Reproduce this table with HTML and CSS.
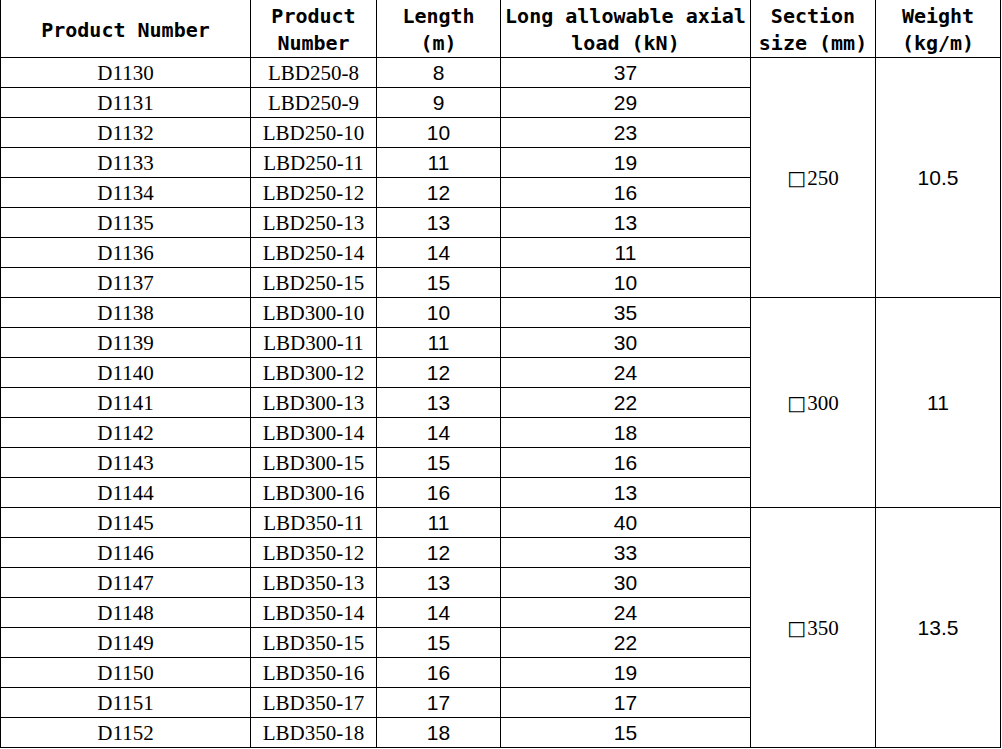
FILE: index.html
```html
<!DOCTYPE html>
<html>
<head>
<meta charset="utf-8">
<link rel="stylesheet" href="styles.css">
</head>
<body>
<table class="spec">
  <colgroup>
    <col class="c-code"><col class="c-model"><col class="c-len"><col class="c-load"><col class="c-sec"><col class="c-wt">
  </colgroup>
  <thead>
    <tr class="head-row">
      <th>Product Number</th>
      <th>Product<br>Number</th>
      <th>Length<br>(m)</th>
      <th>Long allowable axial<br>load (kN)</th>
      <th>Section<br>size (mm)</th>
      <th>Weight<br>(kg/m)</th>
    </tr>
  </thead>
  <tbody>
    <tr><td class="ser">D1130</td><td class="ser">LBD250-8</td><td class="num">8</td><td class="num">37</td><td class="ser sec" rowspan="8"><span class="sq">□</span>250</td><td class="num" rowspan="8">10.5</td></tr>
    <tr><td class="ser">D1131</td><td class="ser">LBD250-9</td><td class="num">9</td><td class="num">29</td></tr>
    <tr><td class="ser">D1132</td><td class="ser">LBD250-10</td><td class="num">10</td><td class="num">23</td></tr>
    <tr><td class="ser">D1133</td><td class="ser">LBD250-11</td><td class="num">11</td><td class="num">19</td></tr>
    <tr><td class="ser">D1134</td><td class="ser">LBD250-12</td><td class="num">12</td><td class="num">16</td></tr>
    <tr><td class="ser">D1135</td><td class="ser">LBD250-13</td><td class="num">13</td><td class="num">13</td></tr>
    <tr><td class="ser">D1136</td><td class="ser">LBD250-14</td><td class="num">14</td><td class="num">11</td></tr>
    <tr><td class="ser">D1137</td><td class="ser">LBD250-15</td><td class="num">15</td><td class="num">10</td></tr>
    <tr><td class="ser">D1138</td><td class="ser">LBD300-10</td><td class="num">10</td><td class="num">35</td><td class="ser sec" rowspan="7"><span class="sq">□</span>300</td><td class="num" rowspan="7">11</td></tr>
    <tr><td class="ser">D1139</td><td class="ser">LBD300-11</td><td class="num">11</td><td class="num">30</td></tr>
    <tr><td class="ser">D1140</td><td class="ser">LBD300-12</td><td class="num">12</td><td class="num">24</td></tr>
    <tr><td class="ser">D1141</td><td class="ser">LBD300-13</td><td class="num">13</td><td class="num">22</td></tr>
    <tr><td class="ser">D1142</td><td class="ser">LBD300-14</td><td class="num">14</td><td class="num">18</td></tr>
    <tr><td class="ser">D1143</td><td class="ser">LBD300-15</td><td class="num">15</td><td class="num">16</td></tr>
    <tr><td class="ser">D1144</td><td class="ser">LBD300-16</td><td class="num">16</td><td class="num">13</td></tr>
    <tr><td class="ser">D1145</td><td class="ser">LBD350-11</td><td class="num">11</td><td class="num">40</td><td class="ser sec" rowspan="8"><span class="sq">□</span>350</td><td class="num" rowspan="8">13.5</td></tr>
    <tr><td class="ser">D1146</td><td class="ser">LBD350-12</td><td class="num">12</td><td class="num">33</td></tr>
    <tr><td class="ser">D1147</td><td class="ser">LBD350-13</td><td class="num">13</td><td class="num">30</td></tr>
    <tr><td class="ser">D1148</td><td class="ser">LBD350-14</td><td class="num">14</td><td class="num">24</td></tr>
    <tr><td class="ser">D1149</td><td class="ser">LBD350-15</td><td class="num">15</td><td class="num">22</td></tr>
    <tr><td class="ser">D1150</td><td class="ser">LBD350-16</td><td class="num">16</td><td class="num">19</td></tr>
    <tr><td class="ser">D1151</td><td class="ser">LBD350-17</td><td class="num">17</td><td class="num">17</td></tr>
    <tr><td class="ser">D1152</td><td class="ser">LBD350-18</td><td class="num">18</td><td class="num">15</td></tr>
  </tbody>
</table>
</body>
</html>
```

FILE: styles.css
```css
html, body {
  margin: 0;
  padding: 0;
  background: #fff;
}

.spec {
  border-collapse: collapse;
  table-layout: fixed;
  width: 1001px;
  color: #000;
}

.c-code { width: 250px; }
.c-model { width: 126px; }
.c-len { width: 124px; }
.c-load { width: 250px; }
.c-sec { width: 125px; }
.c-wt { width: 125px; }

.spec th,
.spec td {
  border: 1px solid #000;
  padding: 0;
  text-align: center;
  vertical-align: middle;
  white-space: nowrap;
  overflow: hidden;
}

.spec th {
  border-top: none;
  font-family: "DejaVu Sans Mono", "Liberation Mono", monospace;
  font-weight: bold;
  font-size: 20px;
  line-height: 27px;
  padding-top: 3px;
  box-sizing: border-box;
}

.head-row {
  height: 57px;
}

.spec tbody tr {
  height: 30px;
}

.ser {
  font-family: "Liberation Serif", "DejaVu Serif", serif;
  font-size: 21px;
  line-height: 24px;
}

.sq {
  font-family: "DejaVu Sans", sans-serif;
  font-size: 20px;
  margin-right: 1px;
}

.num {
  font-family: "Liberation Sans", Arial, sans-serif;
  font-size: 21px;
  line-height: 24px;
}
```
